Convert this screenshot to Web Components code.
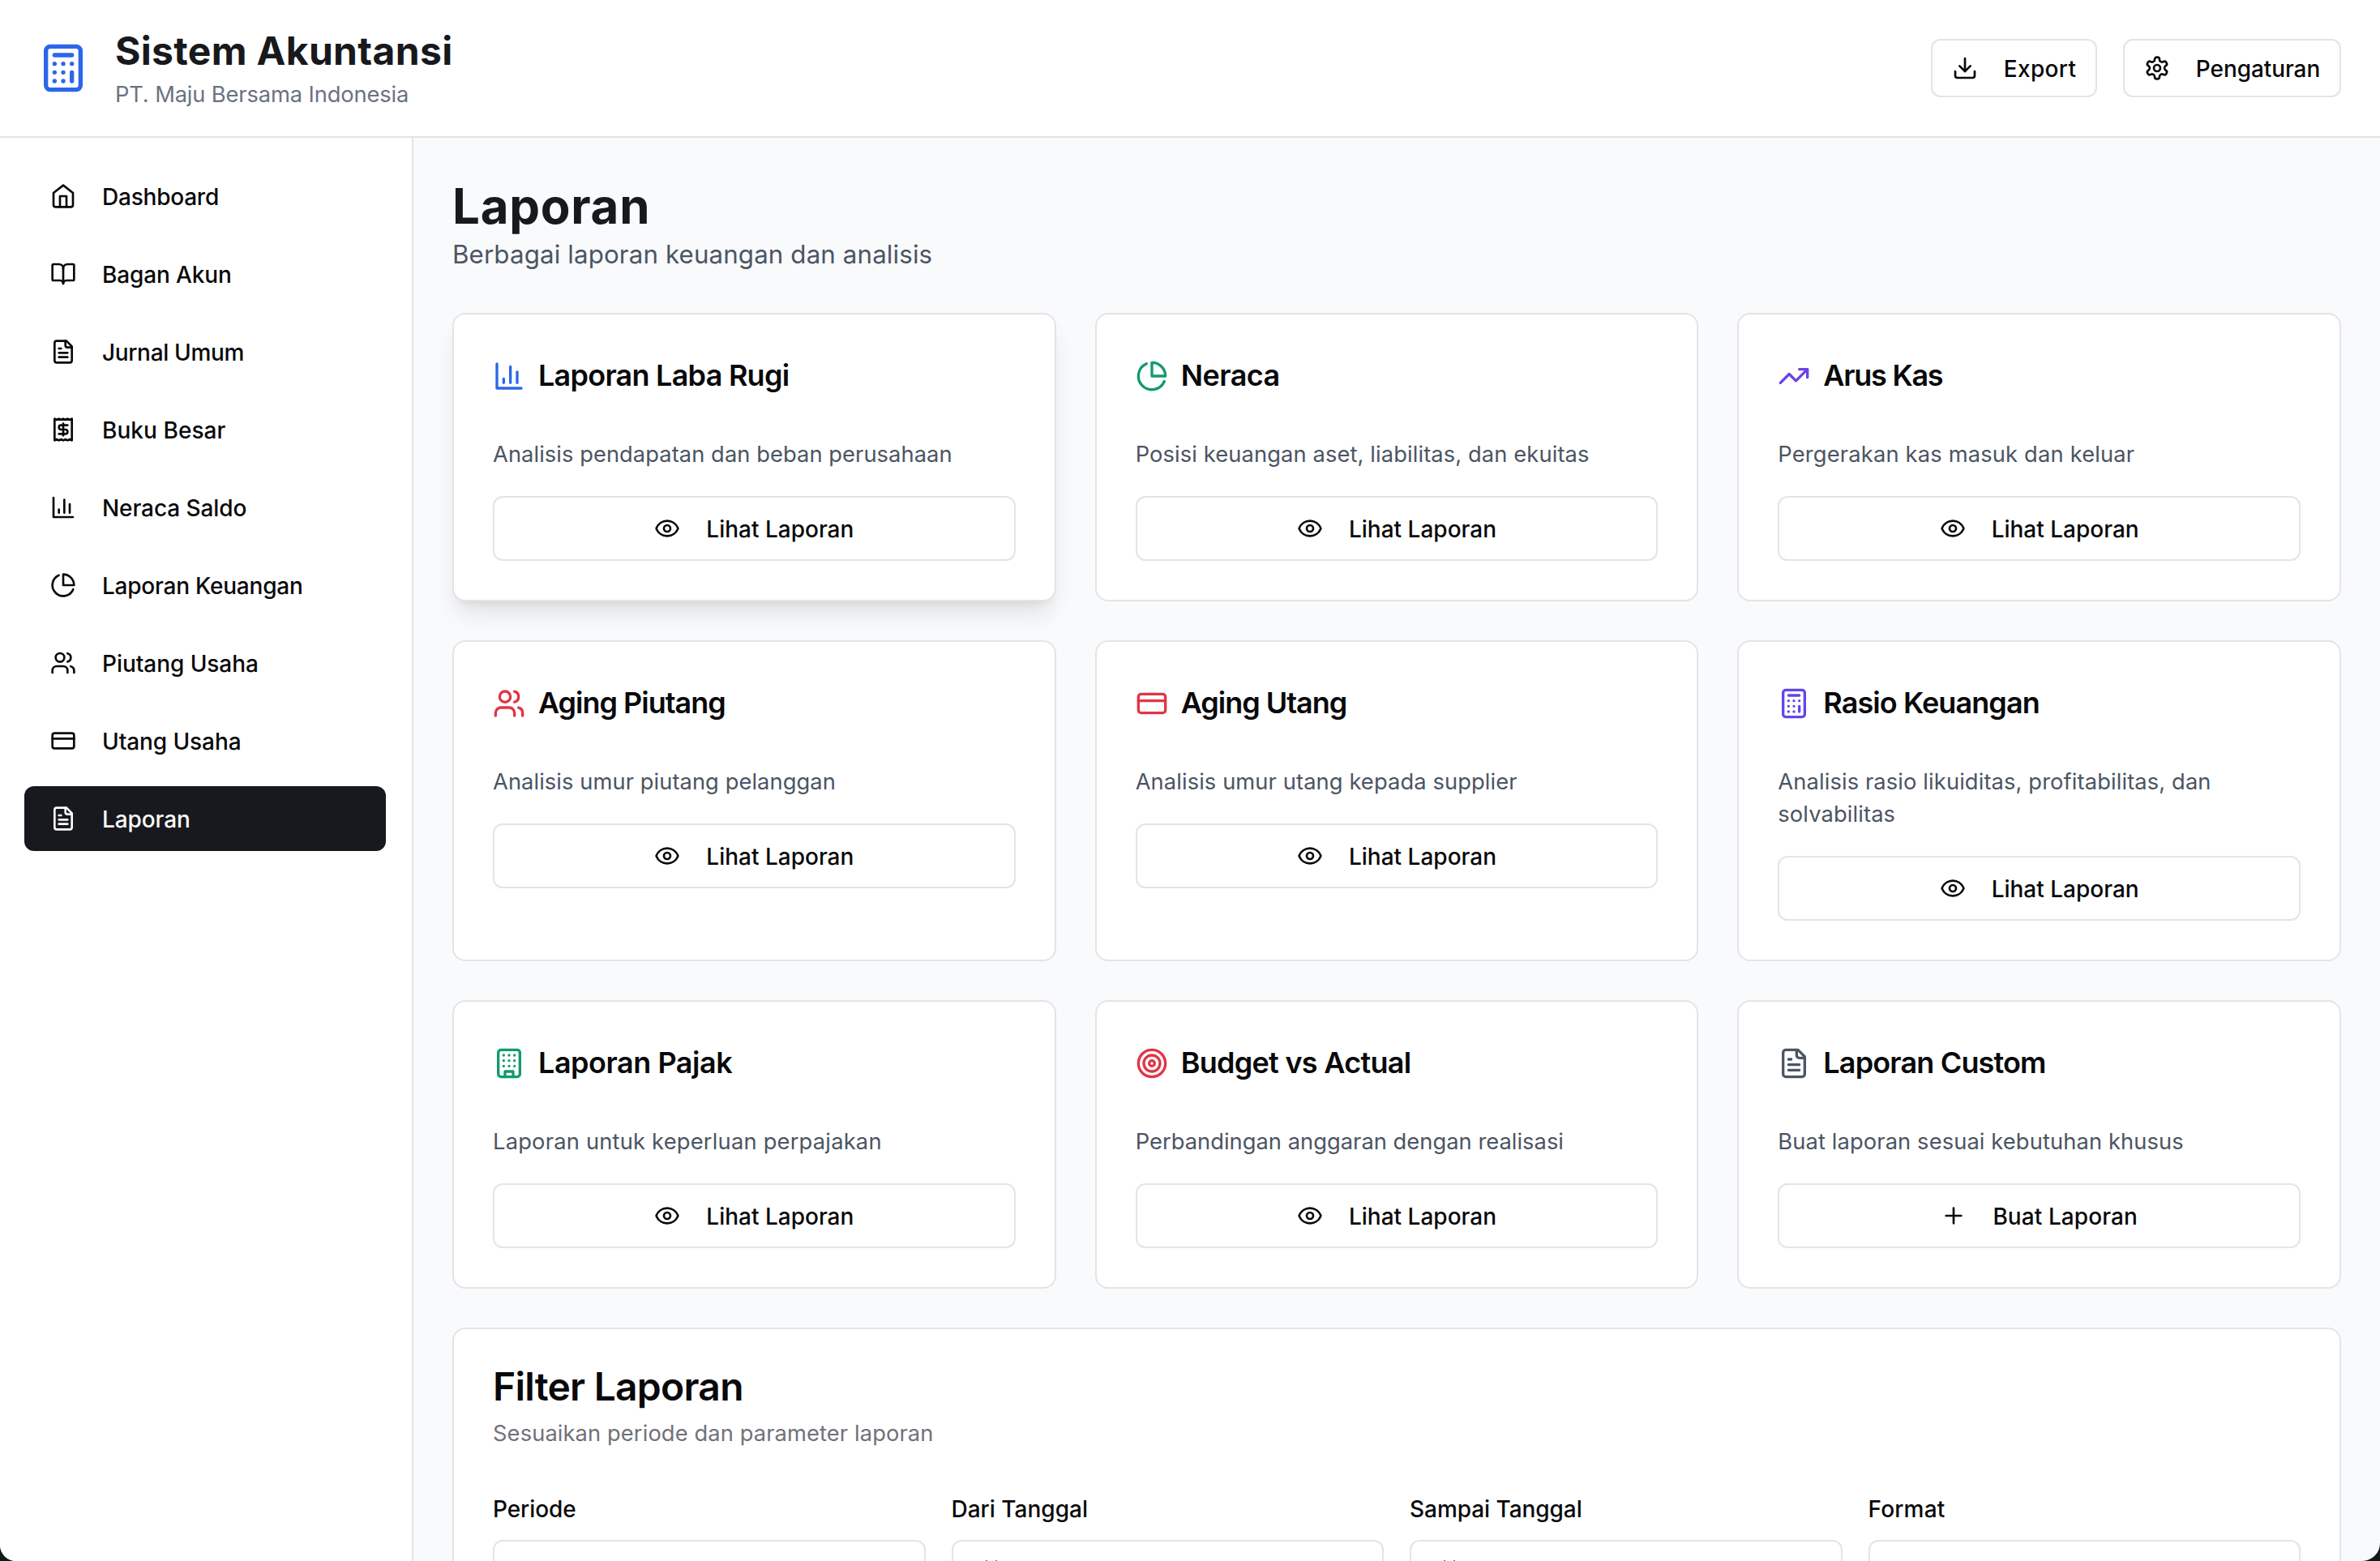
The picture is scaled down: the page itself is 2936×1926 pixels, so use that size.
<!DOCTYPE html>
<html lang="id">
<head>
<meta charset="utf-8">
<title>Sistem Akuntansi</title>
<style>
  body {
    margin: 0;
    height: 1926px;
    overflow: hidden;
    background: #10191b;
    font-family: Inter, "Liberation Sans", sans-serif;
    color: #09090b;
  }
</style>
</head>
<body>
<accounting-app>
  <app-header slot="header">
    <span slot="title">Sistem Akuntansi</span>
    <span slot="company">PT. Maju Bersama Indonesia</span>
    <outline-button slot="actions" icon="download" size="sm" style="width: 205px; --track: 0.012em">Export</outline-button>
    <outline-button slot="actions" icon="settings" size="sm" style="width: 269px; --track: -0.003em">Pengaturan</outline-button>
  </app-header>

  <side-nav slot="sidebar">
    <nav-item icon="home" style="--track: -0.008em">Dashboard</nav-item>
    <nav-item icon="book" style="--track: -0.005em">Bagan Akun</nav-item>
    <nav-item icon="file" style="--track: -0.012em">Jurnal Umum</nav-item>
    <nav-item icon="receipt" style="--track: 0.002em">Buku Besar</nav-item>
    <nav-item icon="chart" style="--track: -0.003em">Neraca Saldo</nav-item>
    <nav-item icon="pie" style="--track: -0.008em">Laporan Keuangan</nav-item>
    <nav-item icon="users" style="--track: -0.002em">Piutang Usaha</nav-item>
    <nav-item icon="card" style="--track: -0.003em">Utang Usaha</nav-item>
    <nav-item icon="file" active style="--track: -0.003em">Laporan</nav-item>
  </side-nav>

  <page-heading>
    <span slot="title">Laporan</span>
    <span slot="subtitle">Berbagai laporan keuangan dan analisis</span>
  </page-heading>

  <report-grid></report-grid>

  <filter-card>
    <span slot="title">Filter Laporan</span>
    <span slot="subtitle">Sesuaikan periode dan parameter laporan</span>
    <filter-field style="--track: -0.002em">Periode</filter-field>
    <filter-field date>Dari Tanggal</filter-field>
    <filter-field style="--track: -0.002em" date>Sampai Tanggal</filter-field>
    <filter-field style="--track: 0.006em">Format</filter-field>
  </filter-card>
</accounting-app>

<script>
const ICONS = {
  calculator: `<rect width="16" height="20" x="4" y="2" rx="2"/><path d="M8 6h8M16 14v4M16 10h.01M12 10h.01M8 10h.01M12 14h.01M8 14h.01M12 18h.01M8 18h.01"/>`,
  download: `<path d="M21 15v4a2 2 0 0 1-2 2H5a2 2 0 0 1-2-2v-4"/><path d="m7 10 5 5 5-5"/><path d="M12 15V3"/>`,
  settings: `<path d="M12.22 2h-.44a2 2 0 0 0-2 2v.18a2 2 0 0 1-1 1.73l-.43.25a2 2 0 0 1-2 0l-.15-.08a2 2 0 0 0-2.73.73l-.22.38a2 2 0 0 0 .73 2.73l.15.1a2 2 0 0 1 1 1.72v.51a2 2 0 0 1-1 1.74l-.15.09a2 2 0 0 0-.73 2.73l.22.38a2 2 0 0 0 2.73.73l.15-.08a2 2 0 0 1 2 0l.43.25a2 2 0 0 1 1 1.73V20a2 2 0 0 0 2 2h.44a2 2 0 0 0 2-2v-.18a2 2 0 0 1 1-1.73l.43-.25a2 2 0 0 1 2 0l.15.08a2 2 0 0 0 2.73-.73l.22-.39a2 2 0 0 0-.73-2.73l-.15-.08a2 2 0 0 1-1-1.74v-.5a2 2 0 0 1 1-1.74l.15-.09a2 2 0 0 0 .73-2.73l-.22-.38a2 2 0 0 0-2.73-.73l-.15.08a2 2 0 0 1-2 0l-.43-.25a2 2 0 0 1-1-1.73V4a2 2 0 0 0-2-2z"/><circle cx="12" cy="12" r="3"/>`,
  home: `<path d="m3 9 9-7 9 7v11a2 2 0 0 1-2 2H5a2 2 0 0 1-2-2z"/><path d="M9 22V12h6v10"/>`,
  book: `<path d="M12 7v14"/><path d="M3 18a1 1 0 0 1-1-1V4a1 1 0 0 1 1-1h5a4 4 0 0 1 4 4 4 4 0 0 1 4-4h5a1 1 0 0 1 1 1v13a1 1 0 0 1-1 1h-6a3 3 0 0 0-3 3 3 3 0 0 0-3-3z"/>`,
  file: `<path d="M15 2H6a2 2 0 0 0-2 2v16a2 2 0 0 0 2 2h12a2 2 0 0 0 2-2V7Z"/><path d="M14 2v4a2 2 0 0 0 2 2h4M10 9H8M16 13H8M16 17H8"/>`,
  receipt: `<path d="M4 2v20l2-1 2 1 2-1 2 1 2-1 2 1 2-1 2 1V2l-2 1-2-1-2 1-2-1-2 1-2-1-2 1Z"/><path d="M16 8h-6a2 2 0 1 0 0 4h4a2 2 0 1 1 0 4H8"/><path d="M12 17.5v-11"/>`,
  chart: `<path d="M3 3v18h18"/><path d="M18 17V9M13 17V5M8 17v-3"/>`,
  pie: `<path d="M21.21 15.89A10 10 0 1 1 8 2.83"/><path d="M22 12A10 10 0 0 0 12 2v10z"/>`,
  users: `<path d="M16 21v-2a4 4 0 0 0-4-4H6a4 4 0 0 0-4 4v2"/><circle cx="9" cy="7" r="4"/><path d="M22 21v-2a4 4 0 0 0-3-3.87M16 3.13a4 4 0 0 1 0 7.75"/>`,
  card: `<rect width="20" height="14" x="2" y="5" rx="2"/><path d="M2 10h20"/>`,
  trend: `<path d="m22 7-8.5 8.5-5-5L2 17"/><path d="M16 7h6v6"/>`,
  eye: `<path d="M2.062 12.348a1 1 0 0 1 0-.696 10.75 10.75 0 0 1 19.876 0 1 1 0 0 1 0 .696 10.75 10.75 0 0 1-19.876 0"/><circle cx="12" cy="12" r="3"/>`,
  building: `<rect width="16" height="20" x="4" y="2" rx="2"/><path d="M9 22v-4h6v4M8 6h.01M16 6h.01M12 6h.01M12 10h.01M12 14h.01M16 10h.01M16 14h.01M8 10h.01M8 14h.01"/>`,
  target: `<circle cx="12" cy="12" r="10"/><circle cx="12" cy="12" r="6"/><circle cx="12" cy="12" r="2"/>`,
  plus: `<path d="M5 12h14M12 5v14"/>`,
};

const REPORTS = [
  { icon: "chart", color: "#2c66ea", title: "Laporan Laba Rugi", titleTrack: -0.021, text: "Analisis pendapatan dan beban perusahaan", textTrack: 0.0022, raised: true },
  { icon: "pie", color: "#119b6d", title: "Neraca", titleTrack: -0.0145, text: "Posisi keuangan aset, liabilitas, dan ekuitas", textTrack: 0.004 },
  { icon: "trend", color: "#6b42e8", title: "Arus Kas", titleTrack: -0.035, text: "Pergerakan kas masuk dan keluar", textTrack: 0.0062 },
  { icon: "users", color: "#e03644", title: "Aging Piutang", titleTrack: -0.0285, text: "Analisis umur piutang pelanggan", textTrack: 0.0025 },
  { icon: "card", color: "#e03644", title: "Aging Utang", titleTrack: -0.0285, text: "Analisis umur utang kepada supplier", textTrack: 0.0035 },
  { icon: "calculator", color: "#5f47ea", title: "Rasio Keuangan", titleTrack: -0.0255, text: "Analisis rasio likuiditas, profitabilitas, dan solvabilitas", textTrack: 0.0042 },
  { icon: "building", color: "#119b6d", title: "Laporan Pajak", titleTrack: -0.013, text: "Laporan untuk keperluan perpajakan", textTrack: 0.0075 },
  { icon: "target", color: "#e03644", title: "Budget vs Actual", titleTrack: -0.02, text: "Perbandingan anggaran dengan realisasi", textTrack: 0.001 },
  { icon: "file", color: "#4b5563", title: "Laporan Custom", titleTrack: -0.0235, text: "Buat laporan sesuai kebutuhan khusus", textTrack: 0.004, action: "Buat Laporan", actionIcon: "plus", actionTrack: "0.003em" },
];

class AppIcon extends HTMLElement {
  constructor() {
    super();
    this.attachShadow({ mode: "open" });
  }

  connectedCallback() {
    this.shadowRoot.innerHTML = `
      <style>
        :host {
          display: block;
          flex: none;
          width: var(--size, 32px);
          height: var(--size, 32px);
        }
        svg {
          display: block;
          width: 100%;
          height: 100%;
        }
      </style>
      <svg viewBox="0 0 24 24" fill="none" stroke="currentColor" stroke-width="2" stroke-linecap="round" stroke-linejoin="round">${ICONS[this.getAttribute("name")]}</svg>
    `;
  }
}

class AccountingApp extends HTMLElement {
  constructor() {
    super();
    this.attachShadow({ mode: "open" });
    this.shadowRoot.innerHTML = `
      <style>
        :host {
          display: flex;
          flex-direction: column;
          height: 1926px;
          overflow: hidden;
          border-radius: 0 0 22px 20px;
          background: #f9fafc;
        }
        .body {
          display: flex;
          flex: 1;
          min-height: 0;
        }
        main {
          flex: 1;
          min-width: 0;
          padding: 48px;
          overflow: hidden;
        }
      </style>
      <slot name="header"></slot>
      <div class="body">
        <slot name="sidebar"></slot>
        <main><slot></slot></main>
      </div>
    `;
  }
}

class AppHeader extends HTMLElement {
  constructor() {
    super();
    this.attachShadow({ mode: "open" });
    this.shadowRoot.innerHTML = `
      <style>
        :host {
          display: flex;
          flex: none;
          align-items: center;
          justify-content: space-between;
          box-sizing: border-box;
          height: 170px;
          padding: 0 48px 0 46px;
          border-bottom: 2px solid #e4e4e7;
          background: #fff;
        }
        .brand, .actions {
          display: flex;
          align-items: center;
          gap: 32px;
        }
        app-icon {
          --size: 64px;
          color: #2c66ea;
        }
        .title {
          font-size: 48px;
          line-height: 62px;
          font-weight: 700;
          letter-spacing: 0.007em;
          color: #18191d;
        }
        .company {
          padding-top: 3px;
          font-size: 27.3px;
          line-height: 40px;
          letter-spacing: -0.005em;
          color: #6b7280;
        }
      </style>
      <div class="brand">
        <app-icon name="calculator"></app-icon>
        <div>
          <div class="title"><slot name="title"></slot></div>
          <div class="company"><slot name="company"></slot></div>
        </div>
      </div>
      <div class="actions"><slot name="actions"></slot></div>
    `;
  }
}

class OutlineButton extends HTMLElement {
  constructor() {
    super();
    this.attachShadow({ mode: "open" });
  }

  connectedCallback() {
    this.shadowRoot.innerHTML = `
      <style>
        :host {
          display: flex;
          align-items: center;
          justify-content: center;
          gap: 32px;
          box-sizing: border-box;
          height: 80px;
          border: 2px solid #e4e4e7;
          border-radius: 12px;
          background: #fff;
          font-size: 28px;
          line-height: 40px;
          font-weight: 500;
          letter-spacing: var(--track, 0);
          white-space: nowrap;
        }
        :host([size="sm"]) {
          height: 72px;
        }
        .label {
          padding-top: 2px;
        }
      </style>
      <app-icon name="${this.getAttribute("icon")}"></app-icon>
      <span class="label"><slot></slot></span>
    `;
  }
}

class SideNav extends HTMLElement {
  constructor() {
    super();
    this.attachShadow({ mode: "open" });
    this.shadowRoot.innerHTML = `
      <style>
        :host {
          display: flex;
          flex: none;
          flex-direction: column;
          gap: 16px;
          box-sizing: border-box;
          width: 510px;
          padding: 32px 32px 32px 30px;
          border-right: 2px solid #e4e4e7;
          background: #fff;
        }
      </style>
      <slot></slot>
    `;
  }
}

class NavItem extends HTMLElement {
  constructor() {
    super();
    this.attachShadow({ mode: "open" });
  }

  connectedCallback() {
    this.shadowRoot.innerHTML = `
      <style>
        :host {
          display: flex;
          align-items: center;
          gap: 32px;
          box-sizing: border-box;
          height: 80px;
          padding: 0 32px;
          border-radius: 12px;
          font-size: 28px;
          line-height: 40px;
          font-weight: 500;
          letter-spacing: var(--track, 0);
        }
        :host([active]) {
          background: #18191e;
          color: #fafafa;
        }
        .label {
          padding-top: 2px;
        }
      </style>
      <app-icon name="${this.getAttribute("icon")}"></app-icon>
      <span class="label"><slot></slot></span>
    `;
  }
}

class PageHeading extends HTMLElement {
  constructor() {
    super();
    this.attachShadow({ mode: "open" });
    this.shadowRoot.innerHTML = `
      <style>
        :host {
          display: block;
          margin-bottom: 48px;
        }
        .title {
          font-size: 60px;
          line-height: 72px;
          font-weight: 700;
          letter-spacing: 0.012em;
          color: #18191d;
        }
        .subtitle {
          font-size: 31.3px;
          line-height: 48px;
          letter-spacing: 0.0038em;
          color: #4b5563;
        }
      </style>
      <div class="title"><slot name="title"></slot></div>
      <div class="subtitle"><slot name="subtitle"></slot></div>
    `;
  }
}

class ReportGrid extends HTMLElement {
  constructor() {
    super();
    this.attachShadow({ mode: "open" });
  }

  connectedCallback() {
    this.shadowRoot.innerHTML = `
      <style>
        :host {
          display: grid;
          grid-template-columns: repeat(3, minmax(0, 1fr));
          gap: 48px;
          margin-bottom: 48px;
        }
      </style>
    `;
    REPORTS.forEach((report) => {
      const card = document.createElement("report-card");
      card.report = report;
      this.shadowRoot.appendChild(card);
    });
  }
}

class ReportCard extends HTMLElement {
  constructor() {
    super();
    this.attachShadow({ mode: "open" });
  }

  connectedCallback() {
    const r = this.report;
    this.toggleAttribute("raised", Boolean(r.raised));
    this.shadowRoot.innerHTML = `
      <style>
        :host {
          display: block;
          padding: 48px;
          border: 2px solid #e4e4e7;
          border-radius: 16px;
          background: #fff;
        }
        :host([raised]) {
          box-shadow: 0 20px 30px -6px rgba(0, 0, 0, 0.1), 0 8px 12px -8px rgba(0, 0, 0, 0.1);
        }
        .title {
          display: flex;
          align-items: center;
          gap: 16px;
          height: 56px;
          margin-bottom: 49px;
          font-size: 36px;
          line-height: 54px;
          font-weight: 600;
        }
        .title app-icon {
          --size: 40px;
          color: ${r.color};
        }
        .title span {
          padding-bottom: 2px;
        }
        p {
          margin: 0 0 31px;
          font-size: 27.3px;
          line-height: 40px;
          color: #4b5563;
        }
      </style>
      <div class="title" style="letter-spacing: ${r.titleTrack}em">
        <app-icon name="${r.icon}"></app-icon>
        <span>${r.title}</span>
      </div>
      <p style="letter-spacing: ${r.textTrack}em">${r.text}</p>
      <outline-button icon="${r.actionIcon || "eye"}" style="--track: ${r.actionTrack || 0}">${r.action || "Lihat Laporan"}</outline-button>
    `;
  }
}

class FilterCard extends HTMLElement {
  constructor() {
    super();
    this.attachShadow({ mode: "open" });
    this.shadowRoot.innerHTML = `
      <style>
        :host {
          display: block;
          padding: 48px;
          border: 2px solid #e4e4e7;
          border-radius: 16px;
          background: #fff;
        }
        .title {
          font-size: 48px;
          line-height: 46px;
          font-weight: 600;
          letter-spacing: -0.016em;
        }
        .subtitle {
          margin: 15px 0 47px;
          font-size: 27.3px;
          line-height: 40px;
          letter-spacing: 0.0037em;
          color: #71717a;
        }
        .fields {
          display: grid;
          grid-template-columns: repeat(4, minmax(0, 1fr));
          gap: 32px;
        }
      </style>
      <div class="title"><slot name="title"></slot></div>
      <div class="subtitle"><slot name="subtitle"></slot></div>
      <div class="fields"><slot></slot></div>
    `;
  }
}

class FilterField extends HTMLElement {
  constructor() {
    super();
    this.attachShadow({ mode: "open" });
  }

  connectedCallback() {
    this.shadowRoot.innerHTML = `
      <style>
        :host {
          display: block;
        }
        .label {
          padding-top: 2px;
          margin-bottom: 14px;
          font-size: 28px;
          line-height: 48px;
          font-weight: 500;
          letter-spacing: var(--track, 0);
        }
        .input {
          box-sizing: border-box;
          height: 80px;
          padding: 0 24px;
          border: 2px solid #e4e4e7;
          border-radius: 12px;
        }
        svg {
          display: block;
        }
      </style>
      <div class="label"><slot></slot></div>
      <div class="input">${this.hasAttribute("date") ? `<svg width="40" height="76" fill="none" stroke="#71717a" stroke-width="2"><path d="M17 23v20M29 23v20"/></svg>` : ""}</div>
    `;
  }
}

customElements.define("app-icon", AppIcon);
customElements.define("accounting-app", AccountingApp);
customElements.define("app-header", AppHeader);
customElements.define("outline-button", OutlineButton);
customElements.define("side-nav", SideNav);
customElements.define("nav-item", NavItem);
customElements.define("page-heading", PageHeading);
customElements.define("report-card", ReportCard);
customElements.define("report-grid", ReportGrid);
customElements.define("filter-card", FilterCard);
customElements.define("filter-field", FilterField);
</script>
</body>
</html>
